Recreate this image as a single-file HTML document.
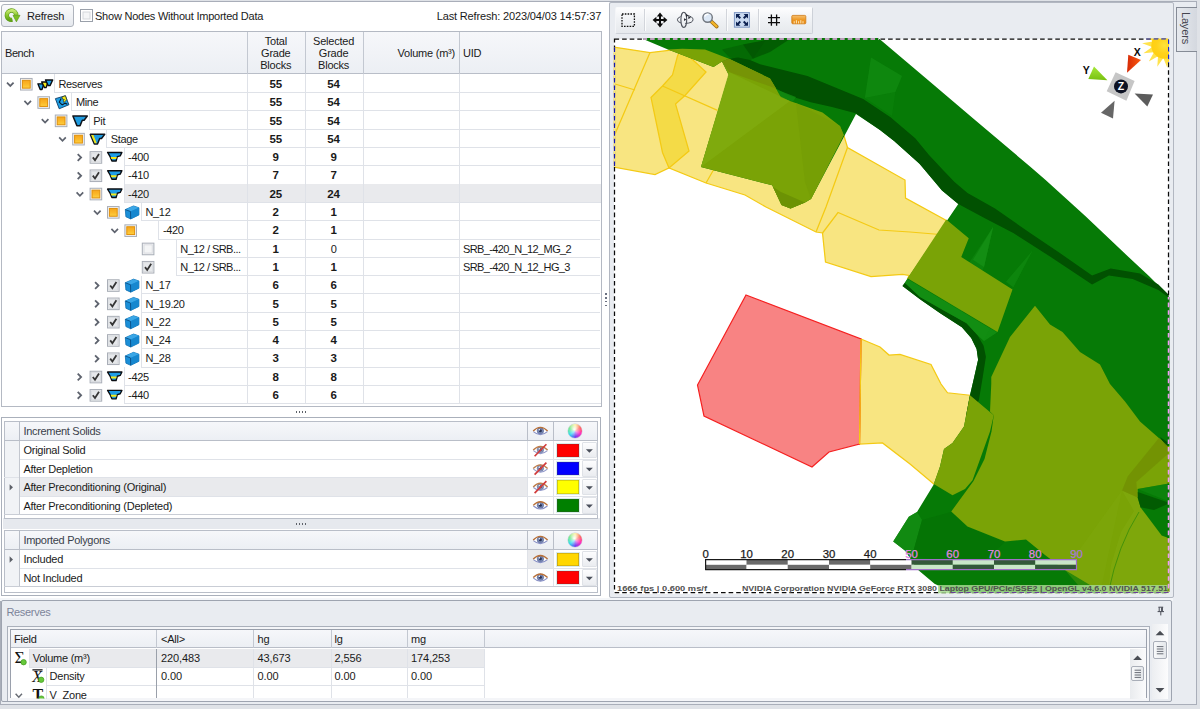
<!DOCTYPE html>
<html><head><meta charset="utf-8"><title>Reserves</title><style>
*{box-sizing:border-box;margin:0;padding:0}
html,body{width:1200px;height:709px;overflow:hidden;background:#dfe2e7;font-family:"Liberation Sans",sans-serif;font-size:11px;color:#1a1a1a}
.abs{position:absolute}
.t{position:absolute;white-space:nowrap;line-height:12px;height:12px;letter-spacing:-0.22px}
.b{font-weight:bold;font-size:11.5px;letter-spacing:0}
svg{position:absolute;left:0;top:0;overflow:visible}
</style></head><body>
<div class="abs" style="left:0px;top:0.8px;width:1197px;height:704.4px;background:#e9ecf1;border:1.3px solid #a9aeb9"></div>
<div class="abs" style="left:0px;top:596px;width:1173px;height:5px;background:#f4f6f9"></div>
<div class="abs" style="left:0px;top:2px;width:609px;height:596px;background:#fff"></div>
<div class="abs" style="left:1.2px;top:4px;width:72.6px;height:22.6px;border:1.3px solid #aeb3bc;border-radius:3px;background:linear-gradient(#fafbfc,#e6e9ee)"></div>
<svg width="1200" height="709" viewBox="0 0 1200 709">
<g id="refreshicon">
<defs><linearGradient id="rfg" x1="0" y1="0" x2="0" y2="1"><stop offset="0" stop-color="#c4e870"/><stop offset="0.5" stop-color="#8cc830"/><stop offset="1" stop-color="#62a416"/></linearGradient></defs>
<path d="M16.2,15.2 A4.7,4.7 0 1 0 12.3,19.8" fill="none" stroke="#5c9a18" stroke-width="4.4"/>
<path d="M16.2,15.2 A4.7,4.7 0 1 0 12.3,19.8" fill="none" stroke="url(#rfg)" stroke-width="3.2"/>
<path d="M13,15.3 L20,15.3 L16.4,21.8 Z" fill="#7cc022" stroke="#5c9a18" stroke-width="0.7" stroke-linejoin="round"/>
</g>
</svg>
<div class="t" style="left:27px;top:9.5px;letter-spacing:-0.2px">Refresh</div>
<div class="abs" style="left:80px;top:9px;width:12.5px;height:12.5px;border:1px solid #9aa0aa;background:#f4f5f7;box-shadow:inset 0 0 0 1.5px #fff, inset 0 0 0 2.5px #d4d7dc"></div>
<div class="t" style="left:95px;top:9.5px;letter-spacing:-0.23px">Show Nodes Without Imported Data</div>
<div class="t" style="left:301.20000000000005px;width:300px;text-align:right;top:9.5px;letter-spacing:-0.15px">Last Refresh: 2023/04/03 14:57:37</div>
<div class="abs" style="left:1px;top:31px;width:600.9px;height:375.5px;border:1.4px solid #b4b9c3;background:#fff"></div>
<div class="abs" style="left:2px;top:32px;width:598.5px;height:42.349999999999994px;background:linear-gradient(#f6f7fa,#eceff4);border-bottom:1px solid #b9bec8"></div>
<div class="abs" style="left:246.8px;top:32px;width:1px;height:42.349999999999994px;background:#c3c8d1"></div>
<div class="abs" style="left:304.6px;top:32px;width:1px;height:42.349999999999994px;background:#c3c8d1"></div>
<div class="abs" style="left:362.6px;top:32px;width:1px;height:42.349999999999994px;background:#c3c8d1"></div>
<div class="abs" style="left:459.4px;top:32px;width:1px;height:42.349999999999994px;background:#c3c8d1"></div>
<div class="t" style="left:5px;top:47px;letter-spacing:-0.45px">Bench</div>
<div class="t" style="left:225.8px;width:100px;text-align:center;top:34.5px;">Total</div>
<div class="t" style="left:225.8px;width:100px;text-align:center;top:46.8px;">Grade</div>
<div class="t" style="left:225.8px;width:100px;text-align:center;top:59.099999999999994px;">Blocks</div>
<div class="t" style="left:283.6px;width:100px;text-align:center;top:34.5px;">Selected</div>
<div class="t" style="left:283.6px;width:100px;text-align:center;top:46.8px;">Grade</div>
<div class="t" style="left:283.6px;width:100px;text-align:center;top:59.099999999999994px;">Blocks</div>
<div class="t" style="left:155px;width:300px;text-align:right;top:47px;">Volume (m&sup3;)</div>
<div class="t" style="left:463px;top:47px;">UID</div>
<div class="abs" style="left:53.9px;top:74.35px;width:1px;height:18.3px;background:#dfe2e8"></div>
<div class="abs" style="left:53.9px;top:92.14999999999999px;width:546.6px;height:1px;background:#dfe2e8"></div>
<div class="abs" style="left:246.8px;top:74.35px;width:1px;height:18.3px;background:#dfe2e8"></div>
<div class="abs" style="left:304.6px;top:74.35px;width:1px;height:18.3px;background:#dfe2e8"></div>
<div class="abs" style="left:362.6px;top:74.35px;width:1px;height:18.3px;background:#dfe2e8"></div>
<div class="abs" style="left:459.4px;top:74.35px;width:1px;height:18.3px;background:#dfe2e8"></div>
<div class="t" style="left:58.5px;top:77.95px;letter-spacing:-0.35px">Reserves</div>
<div class="t b" style="left:225.8px;width:100px;text-align:center;top:77.95px;">55</div>
<div class="t b" style="left:283.6px;width:100px;text-align:center;top:77.95px;">54</div>
<div class="abs" style="left:71.3px;top:92.64999999999999px;width:1px;height:18.3px;background:#dfe2e8"></div>
<div class="abs" style="left:71.3px;top:110.44999999999999px;width:529.2px;height:1px;background:#dfe2e8"></div>
<div class="abs" style="left:246.8px;top:92.64999999999999px;width:1px;height:18.3px;background:#dfe2e8"></div>
<div class="abs" style="left:304.6px;top:92.64999999999999px;width:1px;height:18.3px;background:#dfe2e8"></div>
<div class="abs" style="left:362.6px;top:92.64999999999999px;width:1px;height:18.3px;background:#dfe2e8"></div>
<div class="abs" style="left:459.4px;top:92.64999999999999px;width:1px;height:18.3px;background:#dfe2e8"></div>
<div class="t" style="left:75.89999999999999px;top:96.25px;letter-spacing:-0.35px">Mine</div>
<div class="t b" style="left:225.8px;width:100px;text-align:center;top:96.25px;">55</div>
<div class="t b" style="left:283.6px;width:100px;text-align:center;top:96.25px;">54</div>
<div class="abs" style="left:88.69999999999999px;top:110.94999999999999px;width:1px;height:18.3px;background:#dfe2e8"></div>
<div class="abs" style="left:88.69999999999999px;top:128.75px;width:511.8px;height:1px;background:#dfe2e8"></div>
<div class="abs" style="left:246.8px;top:110.94999999999999px;width:1px;height:18.3px;background:#dfe2e8"></div>
<div class="abs" style="left:304.6px;top:110.94999999999999px;width:1px;height:18.3px;background:#dfe2e8"></div>
<div class="abs" style="left:362.6px;top:110.94999999999999px;width:1px;height:18.3px;background:#dfe2e8"></div>
<div class="abs" style="left:459.4px;top:110.94999999999999px;width:1px;height:18.3px;background:#dfe2e8"></div>
<div class="t" style="left:93.29999999999998px;top:114.55px;letter-spacing:-0.35px">Pit</div>
<div class="t b" style="left:225.8px;width:100px;text-align:center;top:114.55px;">55</div>
<div class="t b" style="left:283.6px;width:100px;text-align:center;top:114.55px;">54</div>
<div class="abs" style="left:106.1px;top:129.25px;width:1px;height:18.3px;background:#dfe2e8"></div>
<div class="abs" style="left:106.1px;top:147.05px;width:494.4px;height:1px;background:#dfe2e8"></div>
<div class="abs" style="left:246.8px;top:129.25px;width:1px;height:18.3px;background:#dfe2e8"></div>
<div class="abs" style="left:304.6px;top:129.25px;width:1px;height:18.3px;background:#dfe2e8"></div>
<div class="abs" style="left:362.6px;top:129.25px;width:1px;height:18.3px;background:#dfe2e8"></div>
<div class="abs" style="left:459.4px;top:129.25px;width:1px;height:18.3px;background:#dfe2e8"></div>
<div class="t" style="left:110.69999999999999px;top:132.85px;letter-spacing:-0.35px">Stage</div>
<div class="t b" style="left:225.8px;width:100px;text-align:center;top:132.85px;">55</div>
<div class="t b" style="left:283.6px;width:100px;text-align:center;top:132.85px;">54</div>
<div class="abs" style="left:123.5px;top:147.55px;width:1px;height:18.3px;background:#dfe2e8"></div>
<div class="abs" style="left:123.5px;top:165.35000000000002px;width:477.0px;height:1px;background:#dfe2e8"></div>
<div class="abs" style="left:246.8px;top:147.55px;width:1px;height:18.3px;background:#dfe2e8"></div>
<div class="abs" style="left:304.6px;top:147.55px;width:1px;height:18.3px;background:#dfe2e8"></div>
<div class="abs" style="left:362.6px;top:147.55px;width:1px;height:18.3px;background:#dfe2e8"></div>
<div class="abs" style="left:459.4px;top:147.55px;width:1px;height:18.3px;background:#dfe2e8"></div>
<div class="t" style="left:128.1px;top:151.15px;letter-spacing:-0.35px">-400</div>
<div class="t b" style="left:225.8px;width:100px;text-align:center;top:151.15px;">9</div>
<div class="t b" style="left:283.6px;width:100px;text-align:center;top:151.15px;">9</div>
<div class="abs" style="left:123.5px;top:165.85px;width:1px;height:18.3px;background:#dfe2e8"></div>
<div class="abs" style="left:123.5px;top:183.65px;width:477.0px;height:1px;background:#dfe2e8"></div>
<div class="abs" style="left:246.8px;top:165.85px;width:1px;height:18.3px;background:#dfe2e8"></div>
<div class="abs" style="left:304.6px;top:165.85px;width:1px;height:18.3px;background:#dfe2e8"></div>
<div class="abs" style="left:362.6px;top:165.85px;width:1px;height:18.3px;background:#dfe2e8"></div>
<div class="abs" style="left:459.4px;top:165.85px;width:1px;height:18.3px;background:#dfe2e8"></div>
<div class="t" style="left:128.1px;top:169.45px;letter-spacing:-0.35px">-410</div>
<div class="t b" style="left:225.8px;width:100px;text-align:center;top:169.45px;">7</div>
<div class="t b" style="left:283.6px;width:100px;text-align:center;top:169.45px;">7</div>
<div class="abs" style="left:123.5px;top:184.15px;width:477.0px;height:18.3px;background:#e9eaed"></div>
<div class="abs" style="left:123.5px;top:184.15px;width:1px;height:18.3px;background:#dfe2e8"></div>
<div class="abs" style="left:123.5px;top:201.95000000000002px;width:477.0px;height:1px;background:#dfe2e8"></div>
<div class="abs" style="left:246.8px;top:184.15px;width:1px;height:18.3px;background:#dfe2e8"></div>
<div class="abs" style="left:304.6px;top:184.15px;width:1px;height:18.3px;background:#dfe2e8"></div>
<div class="abs" style="left:362.6px;top:184.15px;width:1px;height:18.3px;background:#dfe2e8"></div>
<div class="abs" style="left:459.4px;top:184.15px;width:1px;height:18.3px;background:#dfe2e8"></div>
<div class="t" style="left:128.1px;top:187.75px;letter-spacing:-0.35px">-420</div>
<div class="t b" style="left:225.8px;width:100px;text-align:center;top:187.75px;">25</div>
<div class="t b" style="left:283.6px;width:100px;text-align:center;top:187.75px;">24</div>
<div class="abs" style="left:140.9px;top:202.45px;width:1px;height:18.3px;background:#dfe2e8"></div>
<div class="abs" style="left:140.9px;top:220.25px;width:459.6px;height:1px;background:#dfe2e8"></div>
<div class="abs" style="left:246.8px;top:202.45px;width:1px;height:18.3px;background:#dfe2e8"></div>
<div class="abs" style="left:304.6px;top:202.45px;width:1px;height:18.3px;background:#dfe2e8"></div>
<div class="abs" style="left:362.6px;top:202.45px;width:1px;height:18.3px;background:#dfe2e8"></div>
<div class="abs" style="left:459.4px;top:202.45px;width:1px;height:18.3px;background:#dfe2e8"></div>
<div class="t" style="left:145.5px;top:206.04999999999998px;letter-spacing:-0.35px">N_12</div>
<div class="t b" style="left:225.8px;width:100px;text-align:center;top:206.04999999999998px;">2</div>
<div class="t b" style="left:283.6px;width:100px;text-align:center;top:206.04999999999998px;">1</div>
<div class="abs" style="left:158.29999999999998px;top:220.75px;width:1px;height:18.3px;background:#dfe2e8"></div>
<div class="abs" style="left:158.29999999999998px;top:238.55px;width:442.20000000000005px;height:1px;background:#dfe2e8"></div>
<div class="abs" style="left:246.8px;top:220.75px;width:1px;height:18.3px;background:#dfe2e8"></div>
<div class="abs" style="left:304.6px;top:220.75px;width:1px;height:18.3px;background:#dfe2e8"></div>
<div class="abs" style="left:362.6px;top:220.75px;width:1px;height:18.3px;background:#dfe2e8"></div>
<div class="abs" style="left:459.4px;top:220.75px;width:1px;height:18.3px;background:#dfe2e8"></div>
<div class="t" style="left:162.89999999999998px;top:224.35px;letter-spacing:-0.35px">-420</div>
<div class="t b" style="left:225.8px;width:100px;text-align:center;top:224.35px;">2</div>
<div class="t b" style="left:283.6px;width:100px;text-align:center;top:224.35px;">1</div>
<div class="abs" style="left:175.7px;top:239.05px;width:1px;height:18.3px;background:#dfe2e8"></div>
<div class="abs" style="left:175.7px;top:256.85px;width:424.8px;height:1px;background:#dfe2e8"></div>
<div class="abs" style="left:246.8px;top:239.05px;width:1px;height:18.3px;background:#dfe2e8"></div>
<div class="abs" style="left:304.6px;top:239.05px;width:1px;height:18.3px;background:#dfe2e8"></div>
<div class="abs" style="left:362.6px;top:239.05px;width:1px;height:18.3px;background:#dfe2e8"></div>
<div class="abs" style="left:459.4px;top:239.05px;width:1px;height:18.3px;background:#dfe2e8"></div>
<div class="t" style="left:180.29999999999998px;top:242.65px;letter-spacing:-0.55px">N_12 / SRB...</div>
<div class="t b" style="left:225.8px;width:100px;text-align:center;top:242.65px;">1</div>
<div class="t" style="left:283.6px;width:100px;text-align:center;top:242.65px;">0</div>
<div class="t" style="left:463px;top:242.65px;letter-spacing:-0.62px">SRB_-420_N_12_MG_2</div>
<div class="abs" style="left:175.7px;top:257.35px;width:1px;height:18.3px;background:#dfe2e8"></div>
<div class="abs" style="left:175.7px;top:275.15000000000003px;width:424.8px;height:1px;background:#dfe2e8"></div>
<div class="abs" style="left:246.8px;top:257.35px;width:1px;height:18.3px;background:#dfe2e8"></div>
<div class="abs" style="left:304.6px;top:257.35px;width:1px;height:18.3px;background:#dfe2e8"></div>
<div class="abs" style="left:362.6px;top:257.35px;width:1px;height:18.3px;background:#dfe2e8"></div>
<div class="abs" style="left:459.4px;top:257.35px;width:1px;height:18.3px;background:#dfe2e8"></div>
<div class="t" style="left:180.29999999999998px;top:260.95px;letter-spacing:-0.55px">N_12 / SRB...</div>
<div class="t b" style="left:225.8px;width:100px;text-align:center;top:260.95px;">1</div>
<div class="t b" style="left:283.6px;width:100px;text-align:center;top:260.95px;">1</div>
<div class="t" style="left:463px;top:260.95px;letter-spacing:-0.62px">SRB_-420_N_12_HG_3</div>
<div class="abs" style="left:140.9px;top:275.65px;width:1px;height:18.3px;background:#dfe2e8"></div>
<div class="abs" style="left:140.9px;top:293.45px;width:459.6px;height:1px;background:#dfe2e8"></div>
<div class="abs" style="left:246.8px;top:275.65px;width:1px;height:18.3px;background:#dfe2e8"></div>
<div class="abs" style="left:304.6px;top:275.65px;width:1px;height:18.3px;background:#dfe2e8"></div>
<div class="abs" style="left:362.6px;top:275.65px;width:1px;height:18.3px;background:#dfe2e8"></div>
<div class="abs" style="left:459.4px;top:275.65px;width:1px;height:18.3px;background:#dfe2e8"></div>
<div class="t" style="left:145.5px;top:279.24999999999994px;letter-spacing:-0.35px">N_17</div>
<div class="t b" style="left:225.8px;width:100px;text-align:center;top:279.24999999999994px;">6</div>
<div class="t b" style="left:283.6px;width:100px;text-align:center;top:279.24999999999994px;">6</div>
<div class="abs" style="left:140.9px;top:293.95000000000005px;width:1px;height:18.3px;background:#dfe2e8"></div>
<div class="abs" style="left:140.9px;top:311.75000000000006px;width:459.6px;height:1px;background:#dfe2e8"></div>
<div class="abs" style="left:246.8px;top:293.95000000000005px;width:1px;height:18.3px;background:#dfe2e8"></div>
<div class="abs" style="left:304.6px;top:293.95000000000005px;width:1px;height:18.3px;background:#dfe2e8"></div>
<div class="abs" style="left:362.6px;top:293.95000000000005px;width:1px;height:18.3px;background:#dfe2e8"></div>
<div class="abs" style="left:459.4px;top:293.95000000000005px;width:1px;height:18.3px;background:#dfe2e8"></div>
<div class="t" style="left:145.5px;top:297.55px;letter-spacing:-0.35px">N_19.20</div>
<div class="t b" style="left:225.8px;width:100px;text-align:center;top:297.55px;">5</div>
<div class="t b" style="left:283.6px;width:100px;text-align:center;top:297.55px;">5</div>
<div class="abs" style="left:140.9px;top:312.25px;width:1px;height:18.3px;background:#dfe2e8"></div>
<div class="abs" style="left:140.9px;top:330.05px;width:459.6px;height:1px;background:#dfe2e8"></div>
<div class="abs" style="left:246.8px;top:312.25px;width:1px;height:18.3px;background:#dfe2e8"></div>
<div class="abs" style="left:304.6px;top:312.25px;width:1px;height:18.3px;background:#dfe2e8"></div>
<div class="abs" style="left:362.6px;top:312.25px;width:1px;height:18.3px;background:#dfe2e8"></div>
<div class="abs" style="left:459.4px;top:312.25px;width:1px;height:18.3px;background:#dfe2e8"></div>
<div class="t" style="left:145.5px;top:315.84999999999997px;letter-spacing:-0.35px">N_22</div>
<div class="t b" style="left:225.8px;width:100px;text-align:center;top:315.84999999999997px;">5</div>
<div class="t b" style="left:283.6px;width:100px;text-align:center;top:315.84999999999997px;">5</div>
<div class="abs" style="left:140.9px;top:330.54999999999995px;width:1px;height:18.3px;background:#dfe2e8"></div>
<div class="abs" style="left:140.9px;top:348.34999999999997px;width:459.6px;height:1px;background:#dfe2e8"></div>
<div class="abs" style="left:246.8px;top:330.54999999999995px;width:1px;height:18.3px;background:#dfe2e8"></div>
<div class="abs" style="left:304.6px;top:330.54999999999995px;width:1px;height:18.3px;background:#dfe2e8"></div>
<div class="abs" style="left:362.6px;top:330.54999999999995px;width:1px;height:18.3px;background:#dfe2e8"></div>
<div class="abs" style="left:459.4px;top:330.54999999999995px;width:1px;height:18.3px;background:#dfe2e8"></div>
<div class="t" style="left:145.5px;top:334.1499999999999px;letter-spacing:-0.35px">N_24</div>
<div class="t b" style="left:225.8px;width:100px;text-align:center;top:334.1499999999999px;">4</div>
<div class="t b" style="left:283.6px;width:100px;text-align:center;top:334.1499999999999px;">4</div>
<div class="abs" style="left:140.9px;top:348.85px;width:1px;height:18.3px;background:#dfe2e8"></div>
<div class="abs" style="left:140.9px;top:366.65000000000003px;width:459.6px;height:1px;background:#dfe2e8"></div>
<div class="abs" style="left:246.8px;top:348.85px;width:1px;height:18.3px;background:#dfe2e8"></div>
<div class="abs" style="left:304.6px;top:348.85px;width:1px;height:18.3px;background:#dfe2e8"></div>
<div class="abs" style="left:362.6px;top:348.85px;width:1px;height:18.3px;background:#dfe2e8"></div>
<div class="abs" style="left:459.4px;top:348.85px;width:1px;height:18.3px;background:#dfe2e8"></div>
<div class="t" style="left:145.5px;top:352.45px;letter-spacing:-0.35px">N_28</div>
<div class="t b" style="left:225.8px;width:100px;text-align:center;top:352.45px;">3</div>
<div class="t b" style="left:283.6px;width:100px;text-align:center;top:352.45px;">3</div>
<div class="abs" style="left:123.5px;top:367.15px;width:1px;height:18.3px;background:#dfe2e8"></div>
<div class="abs" style="left:123.5px;top:384.95px;width:477.0px;height:1px;background:#dfe2e8"></div>
<div class="abs" style="left:246.8px;top:367.15px;width:1px;height:18.3px;background:#dfe2e8"></div>
<div class="abs" style="left:304.6px;top:367.15px;width:1px;height:18.3px;background:#dfe2e8"></div>
<div class="abs" style="left:362.6px;top:367.15px;width:1px;height:18.3px;background:#dfe2e8"></div>
<div class="abs" style="left:459.4px;top:367.15px;width:1px;height:18.3px;background:#dfe2e8"></div>
<div class="t" style="left:128.1px;top:370.74999999999994px;letter-spacing:-0.35px">-425</div>
<div class="t b" style="left:225.8px;width:100px;text-align:center;top:370.74999999999994px;">8</div>
<div class="t b" style="left:283.6px;width:100px;text-align:center;top:370.74999999999994px;">8</div>
<div class="abs" style="left:123.5px;top:385.45000000000005px;width:1px;height:18.3px;background:#dfe2e8"></div>
<div class="abs" style="left:123.5px;top:403.25000000000006px;width:477.0px;height:1px;background:#dfe2e8"></div>
<div class="abs" style="left:246.8px;top:385.45000000000005px;width:1px;height:18.3px;background:#dfe2e8"></div>
<div class="abs" style="left:304.6px;top:385.45000000000005px;width:1px;height:18.3px;background:#dfe2e8"></div>
<div class="abs" style="left:362.6px;top:385.45000000000005px;width:1px;height:18.3px;background:#dfe2e8"></div>
<div class="abs" style="left:459.4px;top:385.45000000000005px;width:1px;height:18.3px;background:#dfe2e8"></div>
<div class="t" style="left:128.1px;top:389.05px;letter-spacing:-0.35px">-440</div>
<div class="t b" style="left:225.8px;width:100px;text-align:center;top:389.05px;">6</div>
<div class="t b" style="left:283.6px;width:100px;text-align:center;top:389.05px;">6</div>
<svg width="1200" height="709" viewBox="0 0 1200 709"><defs>
<linearGradient id="og" x1="0" y1="0" x2="0" y2="1"><stop offset="0" stop-color="#f7a61c"/><stop offset="0.5" stop-color="#fbb829"/><stop offset="1" stop-color="#fdd040"/></linearGradient>
<g id="ic_reserves">
 <path d="M0.6,7.6 L6.6,7.6 L4.7,13.2 L2.9,13.2 Z" fill="#1ea0e6" stroke="#0a0d12" stroke-width="1.4" stroke-linejoin="round"/>
 <path d="M4.4,5.7 L10.9,5.7 L8.7,11.4 L7.2,11.4 Z" fill="#f4ea18" stroke="#0a0d12" stroke-width="1.4" stroke-linejoin="round"/>
 <path d="M8.2,3.7 L15.4,3.7 L12.7,9.4 L10.9,9.4 Z" fill="#1ea0e6" stroke="#0a0d12" stroke-width="1.4" stroke-linejoin="round"/>
</g>
<g id="ic_mine">
 <path d="M0.7,4.1 L10.7,1.2 L14.2,10.2 L4.5,14.2 Z" fill="#1ea0e6" stroke="#0c3c66" stroke-width="0.9" stroke-linejoin="round"/>
 <path d="M6.4,4 L4.6,7.6 L7.4,10.4 M7.4,10.4 L10.4,8.6 L12.6,9.8" fill="none" stroke="#0a1a2a" stroke-width="1.1"/>
 <path d="M7.2,2.5 L10.7,1.2 L12,5.2 L9.3,7.9 L8.6,6.2 L9.6,5 L7.9,4.6 Z" fill="#f4ea18" stroke="#1a1a1a" stroke-width="0.6"/>
</g>
<g id="ic_pit">
 <path d="M0.8,3.2 L15.2,3.2 L12,7.4 L10.2,7.4 L8,12.8 L4.8,12.8 Z" fill="#1e9be0" stroke="#10151c" stroke-width="1.5" stroke-linejoin="round"/>
</g>
<g id="ic_stage">
 <path d="M0.8,3.2 L15.2,3.2 L12,7.4 L10.2,7.4 L8,12.8 L4.8,12.8 Z" fill="#1e9be0" stroke="#10151c" stroke-width="1.5" stroke-linejoin="round"/>
 <path d="M1.6,3.8 L4,3.8 L7.2,12 L5.2,12 Z" fill="#f3e416"/>
</g>
<g id="ic_bench">
 <path d="M0.7,3 L15,3 L13.3,6.4 L10.4,7.2 L9.2,11.5 L5,11.5 L3.2,7.2 Z" fill="#1e9ee8" stroke="#0a0d12" stroke-width="1.4" stroke-linejoin="round"/>
 <path d="M3.7,7.5 L9.9,7.5 L9.3,9.5 L4.5,9.5 Z" fill="#f4ea18"/>
</g>
<g id="ic_cube">
 <path d="M1,5.2 L9.2,1.6 L14.6,3.4 L14.6,10.6 L6.4,14.6 L1.6,12.4 Z" fill="#1a8fd8" stroke="#0f6fb0" stroke-width="0.8" stroke-linejoin="round"/>
 <path d="M1,5.2 L9.2,1.6 L14.6,3.4 L6.2,7.2 Z" fill="#3aa6e6"/>
 <path d="M6.2,7.2 L14.6,3.4 L14.6,10.6 L6.4,14.6 Z" fill="#1687cf"/>
 <path d="M1,5.2 L6.2,7.2 L6.4,14.6" fill="none" stroke="#0a4f86" stroke-width="0.9"/>
</g>
</defs><path d="M7.000000000000001,82.55 L10.3,85.95 L13.600000000000001,82.55" fill="none" stroke="#5e636e" stroke-width="1.7"/><rect x="20.5" y="78.45" width="11.6" height="11.6" fill="#f2f3f5" stroke="#a9aeb7" stroke-width="1"/><rect x="22.4" y="80.35000000000001" width="7.8" height="7.8" fill="url(#og)" stroke="#e0900a" stroke-width="1"/><use href="#ic_reserves" x="37.3" y="76.25"/><path d="M24.4,100.85 L27.7,104.25 L31.0,100.85" fill="none" stroke="#5e636e" stroke-width="1.7"/><rect x="37.9" y="96.75" width="11.6" height="11.6" fill="#f2f3f5" stroke="#a9aeb7" stroke-width="1"/><rect x="39.8" y="98.65" width="7.8" height="7.8" fill="url(#og)" stroke="#e0900a" stroke-width="1"/><use href="#ic_mine" x="54.699999999999996" y="94.55"/><path d="M41.8,119.14999999999999 L45.099999999999994,122.55 L48.39999999999999,119.14999999999999" fill="none" stroke="#5e636e" stroke-width="1.7"/><rect x="55.3" y="115.05" width="11.6" height="11.6" fill="#f2f3f5" stroke="#a9aeb7" stroke-width="1"/><rect x="57.199999999999996" y="116.95" width="7.8" height="7.8" fill="url(#og)" stroke="#e0900a" stroke-width="1"/><use href="#ic_pit" x="72.1" y="112.85"/><path d="M59.2,137.45000000000002 L62.5,140.85 L65.8,137.45000000000002" fill="none" stroke="#5e636e" stroke-width="1.7"/><rect x="72.69999999999999" y="133.35" width="11.6" height="11.6" fill="#f2f3f5" stroke="#a9aeb7" stroke-width="1"/><rect x="74.6" y="135.25" width="7.8" height="7.8" fill="url(#og)" stroke="#e0900a" stroke-width="1"/><use href="#ic_stage" x="89.5" y="131.15"/><path d="M77.69999999999999,154.05 L81.1,157.45000000000002 L77.69999999999999,160.85000000000002" fill="none" stroke="#5e636e" stroke-width="1.8"/><rect x="90.1" y="151.65" width="11.6" height="11.6" fill="#f2f3f5" stroke="#a9aeb7" stroke-width="1"/><rect x="91.39999999999999" y="152.95000000000002" width="9" height="9" fill="#e6e8eb" stroke="#d0d3d8" stroke-width="0.6"/><path d="M92.8,157.35 L95.0,160.15 L99.0,153.95000000000002" fill="none" stroke="#353535" stroke-width="1.8"/><use href="#ic_bench" x="106.89999999999999" y="149.45000000000002"/><path d="M77.69999999999999,172.35 L81.1,175.75 L77.69999999999999,179.15" fill="none" stroke="#5e636e" stroke-width="1.8"/><rect x="90.1" y="169.95" width="11.6" height="11.6" fill="#f2f3f5" stroke="#a9aeb7" stroke-width="1"/><rect x="91.39999999999999" y="171.25" width="9" height="9" fill="#e6e8eb" stroke="#d0d3d8" stroke-width="0.6"/><path d="M92.8,175.64999999999998 L95.0,178.45 L99.0,172.25" fill="none" stroke="#353535" stroke-width="1.8"/><use href="#ic_bench" x="106.89999999999999" y="167.75"/><path d="M76.6,192.35000000000002 L79.89999999999999,195.75 L83.19999999999999,192.35000000000002" fill="none" stroke="#5e636e" stroke-width="1.7"/><rect x="90.1" y="188.25" width="11.6" height="11.6" fill="#f2f3f5" stroke="#a9aeb7" stroke-width="1"/><rect x="92.0" y="190.15" width="7.8" height="7.8" fill="url(#og)" stroke="#e0900a" stroke-width="1"/><use href="#ic_bench" x="106.89999999999999" y="186.05"/><path d="M94.0,210.65 L97.3,214.04999999999998 L100.6,210.65" fill="none" stroke="#5e636e" stroke-width="1.7"/><rect x="107.5" y="206.54999999999998" width="11.6" height="11.6" fill="#f2f3f5" stroke="#a9aeb7" stroke-width="1"/><rect x="109.4" y="208.45" width="7.8" height="7.8" fill="url(#og)" stroke="#e0900a" stroke-width="1"/><use href="#ic_cube" x="124.3" y="204.35"/><path d="M111.39999999999999,228.95000000000002 L114.69999999999999,232.35 L117.99999999999999,228.95000000000002" fill="none" stroke="#5e636e" stroke-width="1.7"/><rect x="124.89999999999999" y="224.85" width="11.6" height="11.6" fill="#f2f3f5" stroke="#a9aeb7" stroke-width="1"/><rect x="126.8" y="226.75" width="7.8" height="7.8" fill="url(#og)" stroke="#e0900a" stroke-width="1"/><rect x="142.29999999999998" y="243.15" width="11.6" height="11.6" fill="#f2f3f5" stroke="#a9aeb7" stroke-width="1"/><rect x="143.99999999999997" y="244.85" width="8.2" height="8.2" fill="#f4f5f6" stroke="#d5d8dc" stroke-width="0.8"/><rect x="142.29999999999998" y="261.45" width="11.6" height="11.6" fill="#f2f3f5" stroke="#a9aeb7" stroke-width="1"/><rect x="143.6" y="262.75" width="9" height="9" fill="#e6e8eb" stroke="#d0d3d8" stroke-width="0.6"/><path d="M144.99999999999997,267.15 L147.2,269.95 L151.2,263.75" fill="none" stroke="#353535" stroke-width="1.8"/><path d="M95.1,282.15 L98.5,285.54999999999995 L95.1,288.94999999999993" fill="none" stroke="#5e636e" stroke-width="1.8"/><rect x="107.5" y="279.74999999999994" width="11.6" height="11.6" fill="#f2f3f5" stroke="#a9aeb7" stroke-width="1"/><rect x="108.8" y="281.04999999999995" width="9" height="9" fill="#e6e8eb" stroke="#d0d3d8" stroke-width="0.6"/><path d="M110.2,285.44999999999993 L112.4,288.24999999999994 L116.4,282.04999999999995" fill="none" stroke="#353535" stroke-width="1.8"/><use href="#ic_cube" x="124.3" y="277.54999999999995"/><path d="M95.1,300.45000000000005 L98.5,303.85 L95.1,307.25" fill="none" stroke="#5e636e" stroke-width="1.8"/><rect x="107.5" y="298.05" width="11.6" height="11.6" fill="#f2f3f5" stroke="#a9aeb7" stroke-width="1"/><rect x="108.8" y="299.35" width="9" height="9" fill="#e6e8eb" stroke="#d0d3d8" stroke-width="0.6"/><path d="M110.2,303.75 L112.4,306.55 L116.4,300.35" fill="none" stroke="#353535" stroke-width="1.8"/><use href="#ic_cube" x="124.3" y="295.85"/><path d="M95.1,318.75 L98.5,322.15 L95.1,325.54999999999995" fill="none" stroke="#5e636e" stroke-width="1.8"/><rect x="107.5" y="316.34999999999997" width="11.6" height="11.6" fill="#f2f3f5" stroke="#a9aeb7" stroke-width="1"/><rect x="108.8" y="317.65" width="9" height="9" fill="#e6e8eb" stroke="#d0d3d8" stroke-width="0.6"/><path d="M110.2,322.04999999999995 L112.4,324.84999999999997 L116.4,318.65" fill="none" stroke="#353535" stroke-width="1.8"/><use href="#ic_cube" x="124.3" y="314.15"/><path d="M95.1,337.04999999999995 L98.5,340.44999999999993 L95.1,343.8499999999999" fill="none" stroke="#5e636e" stroke-width="1.8"/><rect x="107.5" y="334.6499999999999" width="11.6" height="11.6" fill="#f2f3f5" stroke="#a9aeb7" stroke-width="1"/><rect x="108.8" y="335.94999999999993" width="9" height="9" fill="#e6e8eb" stroke="#d0d3d8" stroke-width="0.6"/><path d="M110.2,340.3499999999999 L112.4,343.1499999999999 L116.4,336.94999999999993" fill="none" stroke="#353535" stroke-width="1.8"/><use href="#ic_cube" x="124.3" y="332.44999999999993"/><path d="M95.1,355.35 L98.5,358.75 L95.1,362.15" fill="none" stroke="#5e636e" stroke-width="1.8"/><rect x="107.5" y="352.95" width="11.6" height="11.6" fill="#f2f3f5" stroke="#a9aeb7" stroke-width="1"/><rect x="108.8" y="354.25" width="9" height="9" fill="#e6e8eb" stroke="#d0d3d8" stroke-width="0.6"/><path d="M110.2,358.65 L112.4,361.45 L116.4,355.25" fill="none" stroke="#353535" stroke-width="1.8"/><use href="#ic_cube" x="124.3" y="350.75"/><path d="M77.69999999999999,373.65 L81.1,377.04999999999995 L77.69999999999999,380.44999999999993" fill="none" stroke="#5e636e" stroke-width="1.8"/><rect x="90.1" y="371.24999999999994" width="11.6" height="11.6" fill="#f2f3f5" stroke="#a9aeb7" stroke-width="1"/><rect x="91.39999999999999" y="372.54999999999995" width="9" height="9" fill="#e6e8eb" stroke="#d0d3d8" stroke-width="0.6"/><path d="M92.8,376.94999999999993 L95.0,379.74999999999994 L99.0,373.54999999999995" fill="none" stroke="#353535" stroke-width="1.8"/><use href="#ic_bench" x="106.89999999999999" y="369.04999999999995"/><path d="M77.69999999999999,391.95000000000005 L81.1,395.35 L77.69999999999999,398.75" fill="none" stroke="#5e636e" stroke-width="1.8"/><rect x="90.1" y="389.55" width="11.6" height="11.6" fill="#f2f3f5" stroke="#a9aeb7" stroke-width="1"/><rect x="91.39999999999999" y="390.85" width="9" height="9" fill="#e6e8eb" stroke="#d0d3d8" stroke-width="0.6"/><path d="M92.8,395.25 L95.0,398.05 L99.0,391.85" fill="none" stroke="#353535" stroke-width="1.8"/><use href="#ic_bench" x="106.89999999999999" y="387.35"/></svg>
<div class="abs" style="left:295.5px;top:411.3px;width:1.6px;height:1.6px;background:#5e626a"></div>
<div class="abs" style="left:298.6px;top:411.3px;width:1.6px;height:1.6px;background:#5e626a"></div>
<div class="abs" style="left:301.7px;top:411.3px;width:1.6px;height:1.6px;background:#5e626a"></div>
<div class="abs" style="left:304.8px;top:411.3px;width:1.6px;height:1.6px;background:#5e626a"></div>
<div class="abs" style="left:1.1px;top:417px;width:600px;height:178.8px;border:1.3px solid #aab0bb;background:#fff"></div>
<div class="abs" style="left:2.9px;top:518.3px;width:596.8px;height:11.2px;background:#e6e9ee"></div>
<div class="abs" style="left:295.5px;top:523.0999999999999px;width:1.6px;height:1.6px;background:#5e626a"></div>
<div class="abs" style="left:298.6px;top:523.0999999999999px;width:1.6px;height:1.6px;background:#5e626a"></div>
<div class="abs" style="left:301.7px;top:523.0999999999999px;width:1.6px;height:1.6px;background:#5e626a"></div>
<div class="abs" style="left:304.8px;top:523.0999999999999px;width:1.6px;height:1.6px;background:#5e626a"></div>
<div class="abs" style="left:4.2px;top:420.6px;width:594.1999999999999px;height:20.3px;background:linear-gradient(#f6f7fa,#eceff4);border:1px solid #b9bec8"></div>
<div class="abs" style="left:19.2px;top:420.6px;width:1px;height:20.3px;background:#b9bec8"></div>
<div class="abs" style="left:527.2px;top:420.6px;width:1px;height:20.3px;background:#b9bec8"></div>
<div class="abs" style="left:553.4px;top:420.6px;width:1px;height:20.3px;background:#b9bec8"></div>
<div class="t" style="left:23.4px;top:425.0px;color:#3a3f4a;letter-spacing:-0.3px">Increment Solids</div>
<div class="abs" style="left:568.4px;top:423.8px;width:14px;height:14px;border-radius:50%;background:radial-gradient(circle at 44% 38%,#fff 0,rgba(255,255,255,.65) 18%,rgba(255,255,255,0) 62%),conic-gradient(from 0deg,#fff08a,#ff5a4a 55deg,#ff30c0 115deg,#7a40f0 175deg,#28d8f4 235deg,#38e060 295deg,#fff08a 360deg);box-shadow:0 0 0 0.5px rgba(160,165,180,.5)"></div>
<div class="abs" style="left:4.2px;top:440.90000000000003px;width:15.0px;height:18.45px;background:#f1f3f6;border-left:1px solid #b9bec8"></div>
<div class="abs" style="left:4.2px;top:458.85px;width:594.1999999999999px;height:1px;background:#dfe2e8"></div>
<div class="abs" style="left:19.2px;top:440.90000000000003px;width:1px;height:18.45px;background:#c3c7cf"></div>
<div class="abs" style="left:527.2px;top:440.90000000000003px;width:1px;height:18.45px;background:#dfe2e8"></div>
<div class="abs" style="left:553.4px;top:440.90000000000003px;width:1px;height:18.45px;background:#dfe2e8"></div>
<div class="abs" style="left:597.4px;top:440.90000000000003px;width:1px;height:18.45px;background:#c3c8d1"></div>
<div class="t" style="left:23.4px;top:444.42500000000007px;letter-spacing:-0.24px">Original Solid</div>
<div class="abs" style="left:556.4px;top:442.50000000000006px;width:23.6px;height:15.25px;background:#ff0000;border:1px solid #d8ecec;box-shadow:inset 0 0 0 0.6px rgba(90,60,60,.45)"></div>
<div class="abs" style="left:581.8px;top:441.70000000000005px;width:15.4px;height:16.65px;border:1px solid #dfe2e7;border-radius:1px;background:linear-gradient(#fdfdfe,#eaecf0)"></div>
<div class="abs" style="left:4.2px;top:459.35px;width:15.0px;height:18.45px;background:#f1f3f6;border-left:1px solid #b9bec8"></div>
<div class="abs" style="left:4.2px;top:477.3px;width:594.1999999999999px;height:1px;background:#dfe2e8"></div>
<div class="abs" style="left:19.2px;top:459.35px;width:1px;height:18.45px;background:#c3c7cf"></div>
<div class="abs" style="left:527.2px;top:459.35px;width:1px;height:18.45px;background:#dfe2e8"></div>
<div class="abs" style="left:553.4px;top:459.35px;width:1px;height:18.45px;background:#dfe2e8"></div>
<div class="abs" style="left:597.4px;top:459.35px;width:1px;height:18.45px;background:#c3c8d1"></div>
<div class="t" style="left:23.4px;top:462.87500000000006px;letter-spacing:-0.24px">After Depletion</div>
<div class="abs" style="left:556.4px;top:460.95000000000005px;width:23.6px;height:15.25px;background:#0000ff;border:1px solid #d8ecec;box-shadow:inset 0 0 0 0.6px rgba(90,60,60,.45)"></div>
<div class="abs" style="left:581.8px;top:460.15000000000003px;width:15.4px;height:16.65px;border:1px solid #dfe2e7;border-radius:1px;background:linear-gradient(#fdfdfe,#eaecf0)"></div>
<div class="abs" style="left:19.2px;top:477.8px;width:508.00000000000006px;height:18.45px;background:#e9eaed"></div>
<div class="abs" style="left:4.2px;top:477.8px;width:15.0px;height:18.45px;background:#f1f3f6;border-left:1px solid #b9bec8"></div>
<div class="abs" style="left:4.2px;top:495.75px;width:594.1999999999999px;height:1px;background:#dfe2e8"></div>
<div class="abs" style="left:19.2px;top:477.8px;width:1px;height:18.45px;background:#c3c7cf"></div>
<div class="abs" style="left:527.2px;top:477.8px;width:1px;height:18.45px;background:#dfe2e8"></div>
<div class="abs" style="left:553.4px;top:477.8px;width:1px;height:18.45px;background:#dfe2e8"></div>
<div class="abs" style="left:597.4px;top:477.8px;width:1px;height:18.45px;background:#c3c8d1"></div>
<div class="t" style="left:23.4px;top:481.32500000000005px;letter-spacing:-0.24px">After Preconditioning (Original)</div>
<div class="abs" style="left:556.4px;top:479.40000000000003px;width:23.6px;height:15.25px;background:#ffff00;border:1px solid #d8ecec;box-shadow:inset 0 0 0 0.6px rgba(90,60,60,.45)"></div>
<div class="abs" style="left:581.8px;top:478.6px;width:15.4px;height:16.65px;border:1px solid #dfe2e7;border-radius:1px;background:linear-gradient(#fdfdfe,#eaecf0)"></div>
<div class="abs" style="left:4.2px;top:496.25px;width:15.0px;height:18.45px;background:#f1f3f6;border-left:1px solid #b9bec8"></div>
<div class="abs" style="left:4.2px;top:514.2px;width:594.1999999999999px;height:1px;background:#dfe2e8"></div>
<div class="abs" style="left:19.2px;top:496.25px;width:1px;height:18.45px;background:#c3c7cf"></div>
<div class="abs" style="left:527.2px;top:496.25px;width:1px;height:18.45px;background:#dfe2e8"></div>
<div class="abs" style="left:553.4px;top:496.25px;width:1px;height:18.45px;background:#dfe2e8"></div>
<div class="abs" style="left:597.4px;top:496.25px;width:1px;height:18.45px;background:#c3c8d1"></div>
<div class="t" style="left:23.4px;top:499.77500000000003px;letter-spacing:-0.24px">After Preconditioning (Depleted)</div>
<div class="abs" style="left:556.4px;top:497.85px;width:23.6px;height:15.25px;background:#008000;border:1px solid #d8ecec;box-shadow:inset 0 0 0 0.6px rgba(90,60,60,.45)"></div>
<div class="abs" style="left:581.8px;top:497.05px;width:15.4px;height:16.65px;border:1px solid #dfe2e7;border-radius:1px;background:linear-gradient(#fdfdfe,#eaecf0)"></div>
<div class="abs" style="left:4.2px;top:514.2px;width:594.1999999999999px;height:1px;background:#c9cdd5"></div>
<div class="abs" style="left:4.2px;top:514.7px;width:1px;height:3.2999999999999545px;background:#b9bec8"></div>
<div class="abs" style="left:597.4px;top:514.7px;width:1px;height:3.2999999999999545px;background:#b9bec8"></div>
<div class="abs" style="left:4.2px;top:517.5px;width:594.1999999999999px;height:1px;background:#b9bec8"></div>
<div class="abs" style="left:4.2px;top:529.6px;width:594.1999999999999px;height:20.3px;background:linear-gradient(#f6f7fa,#eceff4);border:1px solid #b9bec8"></div>
<div class="abs" style="left:19.2px;top:529.6px;width:1px;height:20.3px;background:#b9bec8"></div>
<div class="abs" style="left:527.2px;top:529.6px;width:1px;height:20.3px;background:#b9bec8"></div>
<div class="abs" style="left:553.4px;top:529.6px;width:1px;height:20.3px;background:#b9bec8"></div>
<div class="t" style="left:23.4px;top:534.0px;color:#3a3f4a;letter-spacing:-0.3px">Imported Polygons</div>
<div class="abs" style="left:568.4px;top:532.8000000000001px;width:14px;height:14px;border-radius:50%;background:radial-gradient(circle at 44% 38%,#fff 0,rgba(255,255,255,.65) 18%,rgba(255,255,255,0) 62%),conic-gradient(from 0deg,#fff08a,#ff5a4a 55deg,#ff30c0 115deg,#7a40f0 175deg,#28d8f4 235deg,#38e060 295deg,#fff08a 360deg);box-shadow:0 0 0 0.5px rgba(160,165,180,.5)"></div>
<div class="abs" style="left:19.2px;top:549.9px;width:0.0px;height:18.5px;background:#e9eaed"></div>
<div class="abs" style="left:527.2px;top:549.9px;width:26px;height:18.5px;background:#e9eaed"></div>
<div class="abs" style="left:4.2px;top:549.9px;width:15.0px;height:18.5px;background:#f1f3f6;border-left:1px solid #b9bec8"></div>
<div class="abs" style="left:4.2px;top:567.9px;width:594.1999999999999px;height:1px;background:#dfe2e8"></div>
<div class="abs" style="left:19.2px;top:549.9px;width:1px;height:18.5px;background:#c3c7cf"></div>
<div class="abs" style="left:527.2px;top:549.9px;width:1px;height:18.5px;background:#dfe2e8"></div>
<div class="abs" style="left:553.4px;top:549.9px;width:1px;height:18.5px;background:#dfe2e8"></div>
<div class="abs" style="left:597.4px;top:549.9px;width:1px;height:18.5px;background:#c3c8d1"></div>
<div class="t" style="left:23.4px;top:553.4499999999999px;letter-spacing:-0.24px">Included</div>
<div class="abs" style="left:556.4px;top:551.5px;width:23.6px;height:15.3px;background:#ffd700;border:1px solid #d8ecec;box-shadow:inset 0 0 0 0.6px rgba(90,60,60,.45)"></div>
<div class="abs" style="left:581.8px;top:550.6999999999999px;width:15.4px;height:16.7px;border:1px solid #dfe2e7;border-radius:1px;background:linear-gradient(#fdfdfe,#eaecf0)"></div>
<div class="abs" style="left:4.2px;top:568.4px;width:15.0px;height:18.5px;background:#f1f3f6;border-left:1px solid #b9bec8"></div>
<div class="abs" style="left:4.2px;top:586.4px;width:594.1999999999999px;height:1px;background:#dfe2e8"></div>
<div class="abs" style="left:19.2px;top:568.4px;width:1px;height:18.5px;background:#c3c7cf"></div>
<div class="abs" style="left:527.2px;top:568.4px;width:1px;height:18.5px;background:#dfe2e8"></div>
<div class="abs" style="left:553.4px;top:568.4px;width:1px;height:18.5px;background:#dfe2e8"></div>
<div class="abs" style="left:597.4px;top:568.4px;width:1px;height:18.5px;background:#c3c8d1"></div>
<div class="t" style="left:23.4px;top:571.9499999999999px;letter-spacing:-0.24px">Not Included</div>
<div class="abs" style="left:556.4px;top:570.0px;width:23.6px;height:15.3px;background:#ff0000;border:1px solid #d8ecec;box-shadow:inset 0 0 0 0.6px rgba(90,60,60,.45)"></div>
<div class="abs" style="left:581.8px;top:569.1999999999999px;width:15.4px;height:16.7px;border:1px solid #dfe2e7;border-radius:1px;background:linear-gradient(#fdfdfe,#eaecf0)"></div>
<div class="abs" style="left:4.2px;top:586.4px;width:594.1999999999999px;height:1px;background:#c9cdd5"></div>
<div class="abs" style="left:4.2px;top:586.9px;width:1px;height:5.600000000000023px;background:#b9bec8"></div>
<div class="abs" style="left:597.4px;top:586.9px;width:1px;height:5.600000000000023px;background:#b9bec8"></div>
<div class="abs" style="left:4.2px;top:592.0px;width:594.1999999999999px;height:1px;background:#b9bec8"></div>
<svg width="1200" height="709" viewBox="0 0 1200 709"><defs><g id="eye">
<path d="M-0.2,5.4 Q7,-1.6 14.2,5.4 Q7,11.6 -0.2,5.4 Z" fill="#fff"/>
<circle cx="7" cy="5" r="3.2" fill="#7686b4" stroke="#5a6894" stroke-width="0.7"/>
<circle cx="7" cy="5" r="1.5" fill="#2a3254"/>
<circle cx="6" cy="4" r="0.8" fill="#fff" opacity="0.9"/>
<path d="M0,5.8 Q7,11.8 14,5.8" fill="none" stroke="#8890c6" stroke-width="1.1"/>
<path d="M-0.2,5.2 Q7,-2 14.2,5.2" fill="none" stroke="#b87038" stroke-width="1.4"/>
</g>
<g id="eyex">
<use href="#eye" opacity="0.9"/>
<path d="M1.2,11.4 L13,-0.6" stroke="#d23c3c" stroke-width="1.7"/>
</g></defs><use href="#eye" x="533.4" y="425.8"/><use href="#eyex" x="533.4" y="444.82500000000005"/><path d="M585.9,449.2250000000001 L592.9,449.2250000000001 L589.4,452.7250000000001 Z" fill="#4a4f5a"/><use href="#eyex" x="533.4" y="463.27500000000003"/><path d="M585.9,467.67500000000007 L592.9,467.67500000000007 L589.4,471.17500000000007 Z" fill="#4a4f5a"/><use href="#eyex" x="533.4" y="481.725"/><path d="M585.9,486.12500000000006 L592.9,486.12500000000006 L589.4,489.62500000000006 Z" fill="#4a4f5a"/><path d="M9.6,484.12500000000006 L13,487.32500000000005 L9.6,490.52500000000003 Z" fill="#5c6068"/><use href="#eye" x="533.4" y="500.175"/><path d="M585.9,504.57500000000005 L592.9,504.57500000000005 L589.4,508.07500000000005 Z" fill="#4a4f5a"/><use href="#eye" x="533.4" y="534.8000000000001"/><use href="#eye" x="533.4" y="553.8499999999999"/><path d="M585.9,558.2499999999999 L592.9,558.2499999999999 L589.4,561.7499999999999 Z" fill="#4a4f5a"/><path d="M9.6,556.2499999999999 L13,559.4499999999999 L9.6,562.65 Z" fill="#5c6068"/><use href="#eye" x="533.4" y="572.3499999999999"/><path d="M585.9,576.7499999999999 L592.9,576.7499999999999 L589.4,580.2499999999999 Z" fill="#4a4f5a"/></svg>
<div class="abs" style="left:1px;top:600.3px;width:1171px;height:101.6px;background:#e9ecf1;border:1.3px solid #9ea4b0;border-radius:2px"></div>
<div class="t" style="left:6.4px;top:606px;color:#7c849a;font-size:11px;letter-spacing:-0.3px">Reserves</div>
<svg width="1200" height="709" viewBox="0 0 1200 709"><path d="M1158.4,607.2 H1163.2 M1159.2,607.2 V611.4 M1162.4,607.2 V611.4 M1161.6,607.4 V611.2 M1157.6,611.6 H1164 M1160.8,611.8 V615.4" stroke="#4a4e58" stroke-width="1" fill="none"/></svg>
<div class="abs" style="left:7px;top:626.4px;width:1143px;height:75px;border:1.2px solid #aab0bb;border-bottom:none;background:#f4f5f8"></div>
<div class="abs" style="left:9.6px;top:629.2px;width:1137.6000000000001px;height:69.29999999999995px;border:1.2px solid #9aa0ac;border-bottom:none;background:#fff"></div>
<div class="abs" style="left:10.6px;top:630.2px;width:1135.6000000000001px;height:18.2px;background:linear-gradient(#f6f7fa,#eceff4);border-bottom:1px solid #b9bec8"></div>
<div class="abs" style="left:156px;top:630.2px;width:1px;height:18.2px;background:#c3c8d1"></div>
<div class="abs" style="left:253px;top:630.2px;width:1px;height:18.2px;background:#c3c8d1"></div>
<div class="abs" style="left:330.6px;top:630.2px;width:1px;height:18.2px;background:#c3c8d1"></div>
<div class="abs" style="left:406.8px;top:630.2px;width:1px;height:18.2px;background:#c3c8d1"></div>
<div class="abs" style="left:484px;top:630.2px;width:1px;height:18.2px;background:#c3c8d1"></div>
<div class="t" style="left:14px;top:632.8px;">Field</div>
<div class="t" style="left:161px;top:632.8px;">&lt;All&gt;</div>
<div class="t" style="left:257.5px;top:632.8px;">hg</div>
<div class="t" style="left:334.5px;top:632.8px;">lg</div>
<div class="t" style="left:411px;top:632.8px;">mg</div>
<div class="abs" style="left:28.7px;top:648.6px;width:455.3px;height:18.4px;background:#e9eaed"></div>
<div class="abs" style="left:28.7px;top:666.5px;width:455.3px;height:1px;background:#dfe2e8"></div>
<div class="abs" style="left:156px;top:648.6px;width:1.3px;height:18.399999999999977px;background:#9aa0aa"></div>
<div class="abs" style="left:253px;top:648.6px;width:1px;height:18.399999999999977px;background:#dfe2e8"></div>
<div class="abs" style="left:330.6px;top:648.6px;width:1px;height:18.399999999999977px;background:#dfe2e8"></div>
<div class="abs" style="left:406.8px;top:648.6px;width:1px;height:18.399999999999977px;background:#dfe2e8"></div>
<div class="abs" style="left:484px;top:648.6px;width:1px;height:18.399999999999977px;background:#dfe2e8"></div>
<div class="abs" style="left:45.5px;top:684.8px;width:438.5px;height:1px;background:#dfe2e8"></div>
<div class="abs" style="left:156px;top:667px;width:1.3px;height:18.299999999999955px;background:#9aa0aa"></div>
<div class="abs" style="left:253px;top:667px;width:1px;height:18.299999999999955px;background:#dfe2e8"></div>
<div class="abs" style="left:330.6px;top:667px;width:1px;height:18.299999999999955px;background:#dfe2e8"></div>
<div class="abs" style="left:406.8px;top:667px;width:1px;height:18.299999999999955px;background:#dfe2e8"></div>
<div class="abs" style="left:484px;top:667px;width:1px;height:18.299999999999955px;background:#dfe2e8"></div>
<div class="abs" style="left:156px;top:685.3px;width:1.3px;height:13.200000000000045px;background:#9aa0aa"></div>
<div class="abs" style="left:253px;top:685.3px;width:1px;height:13.200000000000045px;background:#dfe2e8"></div>
<div class="abs" style="left:330.6px;top:685.3px;width:1px;height:13.200000000000045px;background:#dfe2e8"></div>
<div class="abs" style="left:406.8px;top:685.3px;width:1px;height:13.200000000000045px;background:#dfe2e8"></div>
<div class="abs" style="left:484px;top:685.3px;width:1px;height:13.200000000000045px;background:#dfe2e8"></div>
<div class="t" style="left:161px;top:652.0px;letter-spacing:-0.12px">220,483</div>
<div class="t" style="left:257.5px;top:652.0px;letter-spacing:-0.12px">43,673</div>
<div class="t" style="left:334.5px;top:652.0px;letter-spacing:-0.12px">2,556</div>
<div class="t" style="left:411px;top:652.0px;letter-spacing:-0.12px">174,253</div>
<div class="t" style="left:161px;top:670.4px;letter-spacing:-0.12px">0.00</div>
<div class="t" style="left:257.5px;top:670.4px;letter-spacing:-0.12px">0.00</div>
<div class="t" style="left:334.5px;top:670.4px;letter-spacing:-0.12px">0.00</div>
<div class="t" style="left:411px;top:670.4px;letter-spacing:-0.12px">0.00</div>
<div class="t" style="left:32.7px;top:652px;letter-spacing:-0.25px">Volume (m&sup3;)</div>
<div class="t" style="left:49.6px;top:670.4px;letter-spacing:-0.25px">Density</div>
<div class="abs" style="left:0;top:684px;width:1146px;height:14.5px;overflow:hidden"><div class="t" style="left:49.6px;top:4.6px;letter-spacing:-0.25px">V_Zone</div></div>
<div class="abs" style="left:28.7px;top:648.6px;width:1px;height:18.4px;background:#dfe2e8"></div>
<div class="abs" style="left:45.5px;top:667px;width:1px;height:31.5px;background:#dfe2e8"></div>
<svg width="1200" height="709" viewBox="0 0 1200 709"><clipPath id="bclip"><rect x="9" y="629" width="1138" height="69.5"/></clipPath><g clip-path="url(#bclip)">
<text x="14.4" y="663" font-family="Liberation Serif" font-size="17.5" fill="#111">&#931;</text>
<circle cx="23.6" cy="662.2" r="2.7" fill="#66c83a" stroke="#3f9a1e" stroke-width="0.7"/>
<text x="32.2" y="681.6" font-family="Liberation Serif" font-style="italic" font-size="16" fill="#111">X</text>
<path d="M32.4,669.8 H42.6" stroke="#111" stroke-width="1.2"/>
<circle cx="41.2" cy="679.8" r="2.7" fill="#66c83a" stroke="#3f9a1e" stroke-width="0.7"/>
<text x="32.4" y="700.4" font-family="Liberation Serif" font-weight="bold" font-size="16" fill="#111">T</text>
<circle cx="41.4" cy="698.6" r="2.7" fill="#66c83a" stroke="#3f9a1e" stroke-width="0.7"/>
<path d="M15.6,693.8 L18.8,697.2 L22,693.8" fill="none" stroke="#6a6e76" stroke-width="1.5"/>
</g></svg>
<div class="abs" style="left:1130px;top:648.6px;width:16px;height:50px;background:linear-gradient(90deg,#e9ebee,#fbfbfc)"></div>
<div class="abs" style="left:1131px;top:666.2px;width:13.4px;height:15.2px;border:1px solid #a9aeb8;border-radius:2px;background:linear-gradient(90deg,#f8f9fa,#e4e7eb)"></div>
<div class="abs" style="left:1152.3px;top:624.4px;width:16px;height:74.2px;background:linear-gradient(90deg,#eceef1,#fcfcfd)"></div>
<div class="abs" style="left:1153.4px;top:641.1px;width:13.4px;height:18.4px;border:1px solid #a9aeb8;border-radius:2px;background:linear-gradient(90deg,#f8f9fa,#e4e7eb)"></div>
<svg width="1200" height="709" viewBox="0 0 1200 709">
<path d="M1133.2,660 L1137.6,655.6 L1142,660 Z" fill="#4a4d54"/>
<path d="M1134.6,670.2 H1141 M1134.6,672.6 H1141 M1134.6,675 H1141 M1134.6,677.4 H1141" stroke="#5a5e68" stroke-width="0.9"/>
<path d="M1155.6,635.2 L1160,630.8 L1164.4,635.2 Z M1155.6,688 L1160,692.4 L1164.4,688 Z" fill="#4a4d54"/>
<path d="M1156.8,646.6 H1163.4 M1156.8,649 H1163.4 M1156.8,651.4 H1163.4 M1156.8,653.8 H1163.4" stroke="#5a5e68" stroke-width="0.9"/>
</svg>
<div class="abs" style="left:609.3px;top:2.3px;width:564.4px;height:595.6px;background:#e9ecf1;border:1.2px solid #b2b7c1;border-radius:2px"></div>
<div class="abs" style="left:1176.2px;top:7px;width:20.8px;height:45.4px;border:1.2px solid #858b96;border-right:none;background:linear-gradient(90deg,#e6e9ee,#d4d8df)"></div>
<div class="t" style="left:1186.3px;top:27.8px;width:0;height:0;"><div style="position:absolute;transform:translate(-50%,-50%) rotate(90deg);font-size:11px;color:#45454f;white-space:nowrap;line-height:12px;letter-spacing:-0.15px">Layers</div></div>
<div class="abs" style="left:614.5px;top:6.6px;width:198.6px;height:27.6px;border:1px solid;border-color:#fafbfc #cdd1d8 #cdd1d8 #f4f5f8;border-radius:2px;background:linear-gradient(#fdfdfe,#f0f2f5 45%,#e6e9ed)"></div>
<svg width="1200" height="709" viewBox="0 0 1200 709">
<rect x="622" y="14" width="12.4" height="12.4" fill="none" stroke="#111" stroke-width="1.3" stroke-dasharray="1.6,1.2"/>
<path d="M644.5,9 V31 M758.5,9 V31 M726.5,9 V31" stroke="#d2d5db" stroke-width="1"/><path d="M645.5,9 V31 M759.5,9 V31 M727.5,9 V31" stroke="#fbfcfd" stroke-width="1"/>
<!-- move -->
<path d="M660,12.6 L663.2,16.4 L661,16.4 L661,19 L663.6,19 L663.6,16.8 L667.4,20 L663.6,23.2 L663.6,21 L661,21 L661,23.6 L663.2,23.6 L660,27.4 L656.8,23.6 L659,23.6 L659,21 L656.4,21 L656.4,23.2 L652.6,20 L656.4,16.8 L656.4,19 L659,19 L659,16.4 L656.8,16.4 Z" fill="#0c0c0c"/>
<!-- rotate -->
<g fill="none" stroke="#4e525c">
<ellipse cx="683.8" cy="19.8" rx="2.9" ry="7.6" stroke-width="1.1"/>
<path d="M680.6,16.6 Q677.4,17.8 677.4,19.8 Q677.4,22 681,23" stroke-width="1"/>
<path d="M686.8,15.4 Q693,16.4 693,19.6 Q693,23.2 685.2,23.4" stroke-width="1"/>
</g>
<path d="M686,13.8 L688.6,15.6 L686,17 Z M688.4,16 L691,17.8 L688.2,19 Z M684,18.2 L686.6,19.6 L684,21 Z" fill="#2c2f38"/>
<!-- zoom -->
<path d="M711.2,21.4 L716.8,26.6" stroke="#9a6a18" stroke-width="3.6" stroke-linecap="round"/>
<path d="M711.4,21.6 L716.6,26.4" stroke="#f2b428" stroke-width="2.2" stroke-linecap="round"/>
<circle cx="707.6" cy="17.6" r="4.7" fill="#dce8f6" stroke="#70767e" stroke-width="1.4"/>
<path d="M704.8,16.6 A3,3 0 0 1 708.6,14.4" stroke="#fff" stroke-width="1.3" fill="none"/>
<!-- fit -->
<rect x="734.4" y="12.6" width="15" height="14.6" fill="#c9d9f0" stroke="#7f97c4" stroke-width="1"/>
<g fill="#0c2050">
<path d="M736,14 L740.4,14 L738.9,15.5 L741,17.6 L739.6,19 L737.5,16.9 L736,18.4 Z"/>
<path d="M748,14 L743.6,14 L745.1,15.5 L743,17.6 L744.4,19 L746.5,16.9 L748,18.4 Z"/>
<path d="M736,25.8 L740.4,25.8 L738.9,24.3 L741,22.2 L739.6,20.8 L737.5,22.9 L736,21.4 Z"/>
<path d="M748,25.8 L743.6,25.8 L745.1,24.3 L743,22.2 L744.4,20.8 L746.5,22.9 L748,21.4 Z"/>
</g>
<!-- grid -->
<path d="M771.4,14.4 V25.8 M776.6,14.4 V25.8 M768,17.6 H780 M768,22.6 H780" stroke="#0c0c0c" stroke-width="1.3"/>
<!-- ruler -->
<defs><linearGradient id="rul" x1="0" y1="0" x2="0" y2="1"><stop offset="0" stop-color="#f6c070"/><stop offset="0.5" stop-color="#ee9a28"/><stop offset="1" stop-color="#e8860c"/></linearGradient></defs>
<rect x="791.8" y="15.4" width="14" height="8.4" rx="1" fill="url(#rul)" stroke="#cf7a14" stroke-width="0.8"/>
<path d="M794.2,23.4 v-2.2 M796.4,23.4 v-3.2 M798.6,23.4 v-2.2 M800.8,23.4 v-3.2 M803,23.4 v-2.2" stroke="#fff2cc" stroke-width="0.9"/>
</svg>
<div class="abs" style="left:614.0px;top:38.5px;width:555.0px;height:555.1px;background:#fff"></div>
<svg width="1200" height="709" viewBox="0 0 1200 709"><clipPath id="vp"><rect x="614.5" y="39" width="554.0" height="553.5"/></clipPath><g clip-path="url(#vp)"><path d="M610,46.5 L650,52.5 L681,49 L722,58 L790,101 L822.5,112.5 L840,126 L843.75,135 L847.5,147.5 L905,180 L905.5,198 L945.5,220 L968,240 L960.5,258 L1013,288 L998,333 L907.5,279 L909,275.5 L902.5,274.5 L871,276.5 L825.5,262 L822.5,233 L816,232 L766,207 L745,195 L706,183 L669,168 L655,174.5 L610,166.5 Z" fill="#f8e581" stroke="#f4ca14" stroke-width="1.25"/><path d="M861,339 L880,347 L889,355 L900,354.5 L931,364.5 L941,384 L947.5,392.75 L970,395.25 L993.75,415.25 L990,431.5 L972.5,480.25 L965,489 L952.5,495.25 L933.75,484 L910,464 L882.5,443 L859.5,444 Z" fill="#f8e581" stroke="#f4ca14" stroke-width="1.25"/><path d="M681,49 L706,72 L685,95.5 L675.5,104 L689,151 L669,168 L662.5,152.5 L651,97.5 L662.5,86 L672.5,75 L677.5,56 Z" fill="#f4db47" stroke="#f4ca14" stroke-width="1.25"/><path d="M650,52.5 L615,134 M615,84 L635,90 M662.5,86 L717.5,110.4 M706,183 L714,169 M847.5,147.5 L826,207 L816,232 M822.5,233 L838,212.5 L879,230 L910,232 L940,234.5" fill="none" stroke="#f4ca14" stroke-width="1.25"/><path d="M643,39 L879.5,39 L930,81.8 L975.9,120.7 L1030,166.5 L1045.6,180 L1085,215.8 L1121.7,250.6 L1149.2,276.3 L1170,297 L1170,594 L953,594 L945.5,589 L934.5,583.7 L917,569 L905.2,550.7 L893.2,541.5 L908.8,516.7 L917,512 L933.6,484.7 L940,466.5 L944,449 L952.5,443 L964,426.5 L969.6,397 L974.3,376.8 L978.1,359.8 L976.6,348.9 L971.2,338.1 L961.9,327.2 L940.2,313.3 L920,299.3 L902.5,286 L958.3,203.9 L942,190.5 L919.5,163.7 L894.1,141.1 L880,129.9 L856,114 L811,199 L805,202.5 L790.5,208.5 L781.5,205 L772.2,185.3 L701,167 L728.75,75 L722,61.5 L713.5,67 L668,49.5 Z" fill="#067a06"/><path d="M722,49.5 L743,44.5 L766,40 L753,58.7 L746,62 L729,57 Z" fill="#046a04"/><path d="M743,44.5 L766,40 L790,39 L770,52 L753,58.7 Z" fill="#015101" opacity="0.7"/><defs><linearGradient id="dsg" gradientUnits="userSpaceOnUse" x1="900" y1="120" x2="884" y2="140"><stop offset="0" stop-color="#046404"/><stop offset="1" stop-color="#005200"/></linearGradient></defs><path d="M729,58.7 L738,57.6 L750,60 L760,64.2 L807.4,76.1 L863.2,98.9 L890.5,117.2 L915.2,138.3 L929,155 L943,170 L954.5,182 L967.5,192.9 L995,208.5 L1031.6,234.1 L1059.1,252.5 L1092.1,275.4 L1110.7,268.4 L1140,273.5 L1158.4,284.5 L1170,296 L1170,298.5 L1158.4,290 L1132.7,279 L1108.9,275.4 L1092.1,284.6 L1050,256.5 L1013.3,233 L985.8,218.8 L958.3,203.9 L942,190.5 L919.5,163.7 L894.1,141.1 L880,129.9 L855.6,113.3 L832,107 L810.8,102.3 L790,96 L776,88.4 L770,78.5 Z" fill="#015101"/><path d="M871,57.5 L902,76 L895.4,92.1 L864.9,98.1 Z" fill="#118a11" opacity="0.85"/><path d="M895.4,92.1 L892,116 L864.9,98.1 Z" fill="#118a11" opacity="0.3"/><path d="M776.5,89.5 L796,97 L793,101.5 L781,97.5 Z" fill="#118a11" opacity="0.8"/><path d="M902.5,286 L920,299.3 L940.2,313.3 L961.9,327.2 L971.2,338.1 L976.6,348.9 L978.1,359.8 L974.3,376.8 L969.6,397 L966,416 L970,417 L978.9,400 L982.8,376.8 L985.9,356.7 L983.6,345.8 L977.4,335 L966.5,323.3 L943.3,310.2 L920,297 L905,283 Z" fill="#015101"/><path d="M907.5,279 L997,332.6 L984,341 L977.4,335 L966.5,323.3 L943.3,310.2 L920,297 L905,283 Z" fill="#159015" opacity="0.85"/><path d="M993.2,226.8 L973,259.8 L984,267.1 Z" fill="#189418" opacity="0.85"/><path d="M993.2,226.8 L984,267.1 L962,312 L944,300 Z" fill="#118a11" opacity="0.5"/><path d="M1032.6,250.6 L1006,281.8 L1013.3,287.3 Z" fill="#118a11" opacity="0.7"/><path d="M1032.6,250.6 L1013.3,287.3 L998,332 L984,340 Z" fill="#118a11" opacity="0.3"/><path d="M893.2,541.5 L908.8,516.7 L917,512 L922,520 L912,556 L905.2,550.7 Z" fill="#148f14" opacity="0.8"/><path d="M922,520 L951,512 L967,527 L1005,542 L985,560 L940,560 L912,556 Z" fill="#056f05" opacity="0.6"/><path d="M668,49.5 L682.4,48.7 L705,49.5 L729,58.7 L722,61.5 L713.5,67 Z" fill="#7aa306"/><path d="M728.75,75 L722,61.5 L729,58.7 L770,78.5 L776,88.4 L781,97.5 L790,101 L822.5,112.5 L840,126 L843.75,135 L811,199 L805,202.5 L790.5,208.5 L781.5,205 L772.2,185.3 L701,167 Z" fill="#7aa306"/><path d="M722,61.5 L729,58.7 L770,78.5 L776,88.4 L729,72 Z" fill="#769406"/><path d="M729,72 L790,101 L701,167 Z" fill="#82ac10" opacity="0.75"/><path d="M796,103 L840,126 L843.75,135 L811,199 L805,182 Z" fill="#769e05" opacity="0.8"/><path d="M773,187 L781.5,205 L790.5,208.5 L805,202.5 L781,192 Z" fill="#6c9204"/><path d="M946.25,219.5 L968.75,238.25 L961.25,257 L1012.5,289.5 L997.5,332 L907.5,278.25 Z" fill="#7aa306"/><path d="M970,395.25 L993.75,415.25 L990,431.5 L972.5,480.25 L965,489 L952.5,495.25 L933.75,484 L940,466.5 L944,449 L952.5,443 L964,426.5 Z" fill="#7aa306"/><path d="M1035,305.75 L1050,324.5 L1062.5,332 L1080,352 L1100,364.5 L1110,384 L1125,401.5 L1140,421.5 L1160,439 L1170,446.5 L1170,594 L1100,594 L1090,585 L1065,570 L1045,555 L1026,539.5 L1005,541.5 L967.5,526.5 L951.25,511.5 L973.5,481 L984.5,459 L991.5,431.5 L993.75,415.25 L990,411.5 L991.25,384 L991.25,377 L1010,337 Z" fill="#7aa306"/><path d="M1122,490.4 L1137.7,497.5 L1140.5,507.3 L1161.7,535.6 L1170,538.4 L1170,594 L1108,594 L1111,565 L1121,532 L1134,511 Z" fill="#82ac10" opacity="0.55"/><path d="M1122,490.4 L1100,594 L1078,585 L1065,570 Z" fill="#82ac10" opacity="0.3"/><path d="M1139,512 Q1118,545 1108.5,592" fill="none" stroke="#2c8a08" stroke-width="0.7"/><path d="M1137.7,489 L1170,483.3 L1170,538.6 L1161.7,535.6 L1140.5,507.3 L1137.7,497.5 Z" fill="#067a06"/><path d="M1137.7,489 L1170,483.3 L1170,502 Z" fill="#118a11" opacity="0.5"/><path d="M1137.7,492 L1170,503 L1154,510 L1140.5,507.3 L1137.7,497.5 Z" fill="#015101" opacity="0.75"/><path d="M1160,437 L1170,444 L1170,448 L1165,445 Z" fill="#015101"/><path d="M1158.9,438 L1170,448 L1170,452 L1136.3,482 L1137.7,497.5 L1122,490.4 L1127.8,476.3 Z" fill="#729004" opacity="0.85"/><path d="M746,295 L861,339 L859.5,444 L829,452 L812,467 L704,416 L697.5,385 Z" fill="#f88383" stroke="#f52020" stroke-width="1.2"/><path d="M861,339 L859.5,444" stroke="#f4ca14" stroke-width="1.25"/></g></svg>
<svg width="1200" height="709" viewBox="0 0 1200 709"><rect x="614.5" y="39" width="554.0" height="553.5" fill="none" stroke="#0a0a0a" stroke-width="1.25" stroke-dasharray="4.6,3"/></svg>
<svg width="1200" height="709" viewBox="0 0 1200 709"><g clip-path="url(#vp)"><defs><radialGradient id="sun" cx="0.5" cy="0.5" r="0.5"><stop offset="0" stop-color="#ffe23a"/><stop offset="0.6" stop-color="#ffd21a"/><stop offset="1" stop-color="#ffcf10"/></radialGradient></defs><polygon points="1186.9,47.7 1176.3,49.5 1183.7,57.2 1173.4,54.2 1176.7,64.4 1168.8,57.2 1167.3,67.8 1163.3,57.9 1157.3,66.8 1158.0,56.2 1148.8,61.6 1154.0,52.3 1143.4,53.2 1152.1,47.1 1142.1,43.3 1152.7,41.5 1145.3,33.8 1155.6,36.8 1152.3,26.6 1160.2,33.8 1161.7,23.2 1165.7,33.1 1171.7,24.2 1171.0,34.8 1180.2,29.4 1175.0,38.7 1185.6,37.8 1176.9,43.9" fill="#ffe34d"/><circle cx="1164.5" cy="45.5" r="13.2" fill="url(#sun)"/></g><polygon points="1115.6,72.2 1134.6,81 1126.4,100.7 1106.7,91.2" fill="#c6c6c6"/><circle cx="1121" cy="86.4" r="7" fill="#0c1122"/><text x="1121" y="90.3" text-anchor="middle" font-family="Liberation Sans" font-weight="bold" font-size="10.5" fill="#fff">Z</text><defs><linearGradient id="rg" x1="0" y1="0" x2="1" y2="0"><stop offset="0" stop-color="#d62a06"/><stop offset="1" stop-color="#fa5a10"/></linearGradient><linearGradient id="gg" x1="0" y1="0" x2="0" y2="1"><stop offset="0" stop-color="#a6e838"/><stop offset="1" stop-color="#78c010"/></linearGradient></defs><polygon points="1128.3,54.8 1141,60.1 1127,72.8" fill="url(#rg)"/><polygon points="1094,66.5 1107.4,80.2 1088.3,79.1" fill="url(#gg)"/><polygon points="1134.6,93.4 1153,94.4 1147.3,106.4" fill="#5c5c5c"/><polygon points="1114.6,100.7 1113,118.5 1101,112.8" fill="#666"/><text x="1137.2" y="56" text-anchor="middle" font-family="Liberation Sans" font-weight="bold" font-size="10.5" fill="#0a0a0a">X</text><text x="1086.2" y="74" text-anchor="middle" font-family="Liberation Sans" font-weight="bold" font-size="10.5" fill="#0a0a0a">Y</text><rect x="705.2" y="560" width="41.5" height="4.8" fill="#fff"/><rect x="705.2" y="564.8" width="41.5" height="4.6" fill="#6a6a6a"/><rect x="746.5" y="560" width="41.5" height="4.8" fill="#6a6a6a"/><rect x="746.5" y="564.8" width="41.5" height="4.6" fill="#fff"/><rect x="787.7" y="560" width="41.5" height="4.8" fill="#fff"/><rect x="787.7" y="564.8" width="41.5" height="4.6" fill="#6a6a6a"/><rect x="829.0" y="560" width="41.5" height="4.8" fill="#6a6a6a"/><rect x="829.0" y="564.8" width="41.5" height="4.6" fill="#fff"/><rect x="870.2" y="560" width="41.5" height="4.8" fill="#fff"/><rect x="870.2" y="564.8" width="41.5" height="4.6" fill="#6a6a6a"/><rect x="911.5" y="560" width="41.5" height="4.8" fill="#33573a"/><rect x="911.5" y="564.8" width="41.5" height="4.6" fill="#c9e6c9"/><rect x="952.7" y="560" width="41.5" height="4.8" fill="#c9e6c9"/><rect x="952.7" y="564.8" width="41.5" height="4.6" fill="#33573a"/><rect x="994.0" y="560" width="41.5" height="4.8" fill="#33573a"/><rect x="994.0" y="564.8" width="41.5" height="4.6" fill="#c9e6c9"/><rect x="1035.2" y="560" width="41.5" height="4.8" fill="#c9e6c9"/><rect x="1035.2" y="564.8" width="41.5" height="4.6" fill="#33573a"/><path d="M705.2,559.6 H906 M705.2,569.6 H906 M705.6,559 V570" stroke="#1a1a1a" stroke-width="1.2" fill="none"/><path d="M906,559.6 H1076.5 V569.6 H906" stroke="#a070c8" stroke-width="1.2" fill="none"/><text x="705.7" y="558" text-anchor="middle" font-family="Liberation Sans" font-size="11.4" fill="#1a1a1a" stroke="#1a1a1a" stroke-width="0.25">0</text><text x="746.5" y="558" text-anchor="middle" font-family="Liberation Sans" font-size="11.4" fill="#1a1a1a" stroke="#1a1a1a" stroke-width="0.25">10</text><text x="787.7" y="558" text-anchor="middle" font-family="Liberation Sans" font-size="11.4" fill="#1a1a1a" stroke="#1a1a1a" stroke-width="0.25">20</text><text x="829.0" y="558" text-anchor="middle" font-family="Liberation Sans" font-size="11.4" fill="#1a1a1a" stroke="#1a1a1a" stroke-width="0.25">30</text><text x="870.2" y="558" text-anchor="middle" font-family="Liberation Sans" font-size="11.4" fill="#1a1a1a" stroke="#1a1a1a" stroke-width="0.25">40</text><text x="911.5" y="558" text-anchor="middle" font-family="Liberation Sans" font-size="11.4" fill="#e384e3" stroke="#e384e3" stroke-width="0.25">50</text><text x="952.7" y="558" text-anchor="middle" font-family="Liberation Sans" font-size="11.4" fill="#e384e3" stroke="#e384e3" stroke-width="0.25">60</text><text x="994.0" y="558" text-anchor="middle" font-family="Liberation Sans" font-size="11.4" fill="#e384e3" stroke="#e384e3" stroke-width="0.25">70</text><text x="1035.2" y="558" text-anchor="middle" font-family="Liberation Sans" font-size="11.4" fill="#e384e3" stroke="#e384e3" stroke-width="0.25">80</text><text x="1076.5" y="558" text-anchor="middle" font-family="Liberation Sans" font-size="11.4" fill="#a878d8" stroke="#a878d8" stroke-width="0.25">90</text><rect x="938" y="585" width="231" height="8.4" fill="#a6d890" opacity="0.85"/><text x="617" y="591.2" font-family="Liberation Sans" font-weight="bold" font-size="6.6" fill="#505050" textLength="90" lengthAdjust="spacingAndGlyphs">1666 fps | 0.600 ms/f</text><text x="742" y="591.2" font-family="Liberation Sans" font-weight="bold" font-size="6.6" fill="#505050" textLength="426" lengthAdjust="spacingAndGlyphs">NVIDIA Corporation NVIDIA GeForce RTX 3080 Laptop GPU/PCIe/SSE2 | OpenGL v4.6.0 NVIDIA 517.51</text></svg>
<svg width="1200" height="709" viewBox="0 0 1200 709">
<path d="M643.5,39 H879" stroke="#067a06" stroke-width="2"/>
<path d="M643.5,39 H879" stroke="#f6a8f6" stroke-width="1.7" stroke-dasharray="4.6,3" stroke-dashoffset="1"/>
<path d="M614.5,47.5 V167" stroke="#f8e581" stroke-width="2"/>
<path d="M614.5,47.5 V167" stroke="#1418b8" stroke-width="1.2" stroke-dasharray="4.6,3"/>
<path d="M1168.5,297 V446 M1168.5,483.5 V538" stroke="#067a06" stroke-width="2"/>
<path d="M1168.5,446 V483.5 M1168.5,538 V592" stroke="#7aa306" stroke-width="2"/>
<path d="M1168.5,297 V592" stroke="#f098f4" stroke-width="1.5" stroke-dasharray="4.6,3" stroke-dashoffset="2"/>
<path d="M1146,39 H1168.5 V63" stroke="#ffd820" stroke-width="1" fill="none"/>
<path d="M1146,39 H1168.5 V63" stroke="#1a2ae0" stroke-width="1" stroke-dasharray="4.6,3" fill="none"/>
<path d="M951,592.5 H1168.5" stroke="#6a3c9a" stroke-width="1" stroke-dasharray="4.6,3"/>
</svg>
<div class="abs" style="left:605.3px;top:293.0px;width:1.7px;height:1.7px;background:#6a7080"></div>
<div class="abs" style="left:605.3px;top:296.85px;width:1.7px;height:1.7px;background:#6a7080"></div>
<div class="abs" style="left:605.3px;top:300.7px;width:1.7px;height:1.7px;background:#6a7080"></div>
<div class="abs" style="left:605.3px;top:304.55px;width:1.7px;height:1.7px;background:#6a7080"></div>
</body></html>
